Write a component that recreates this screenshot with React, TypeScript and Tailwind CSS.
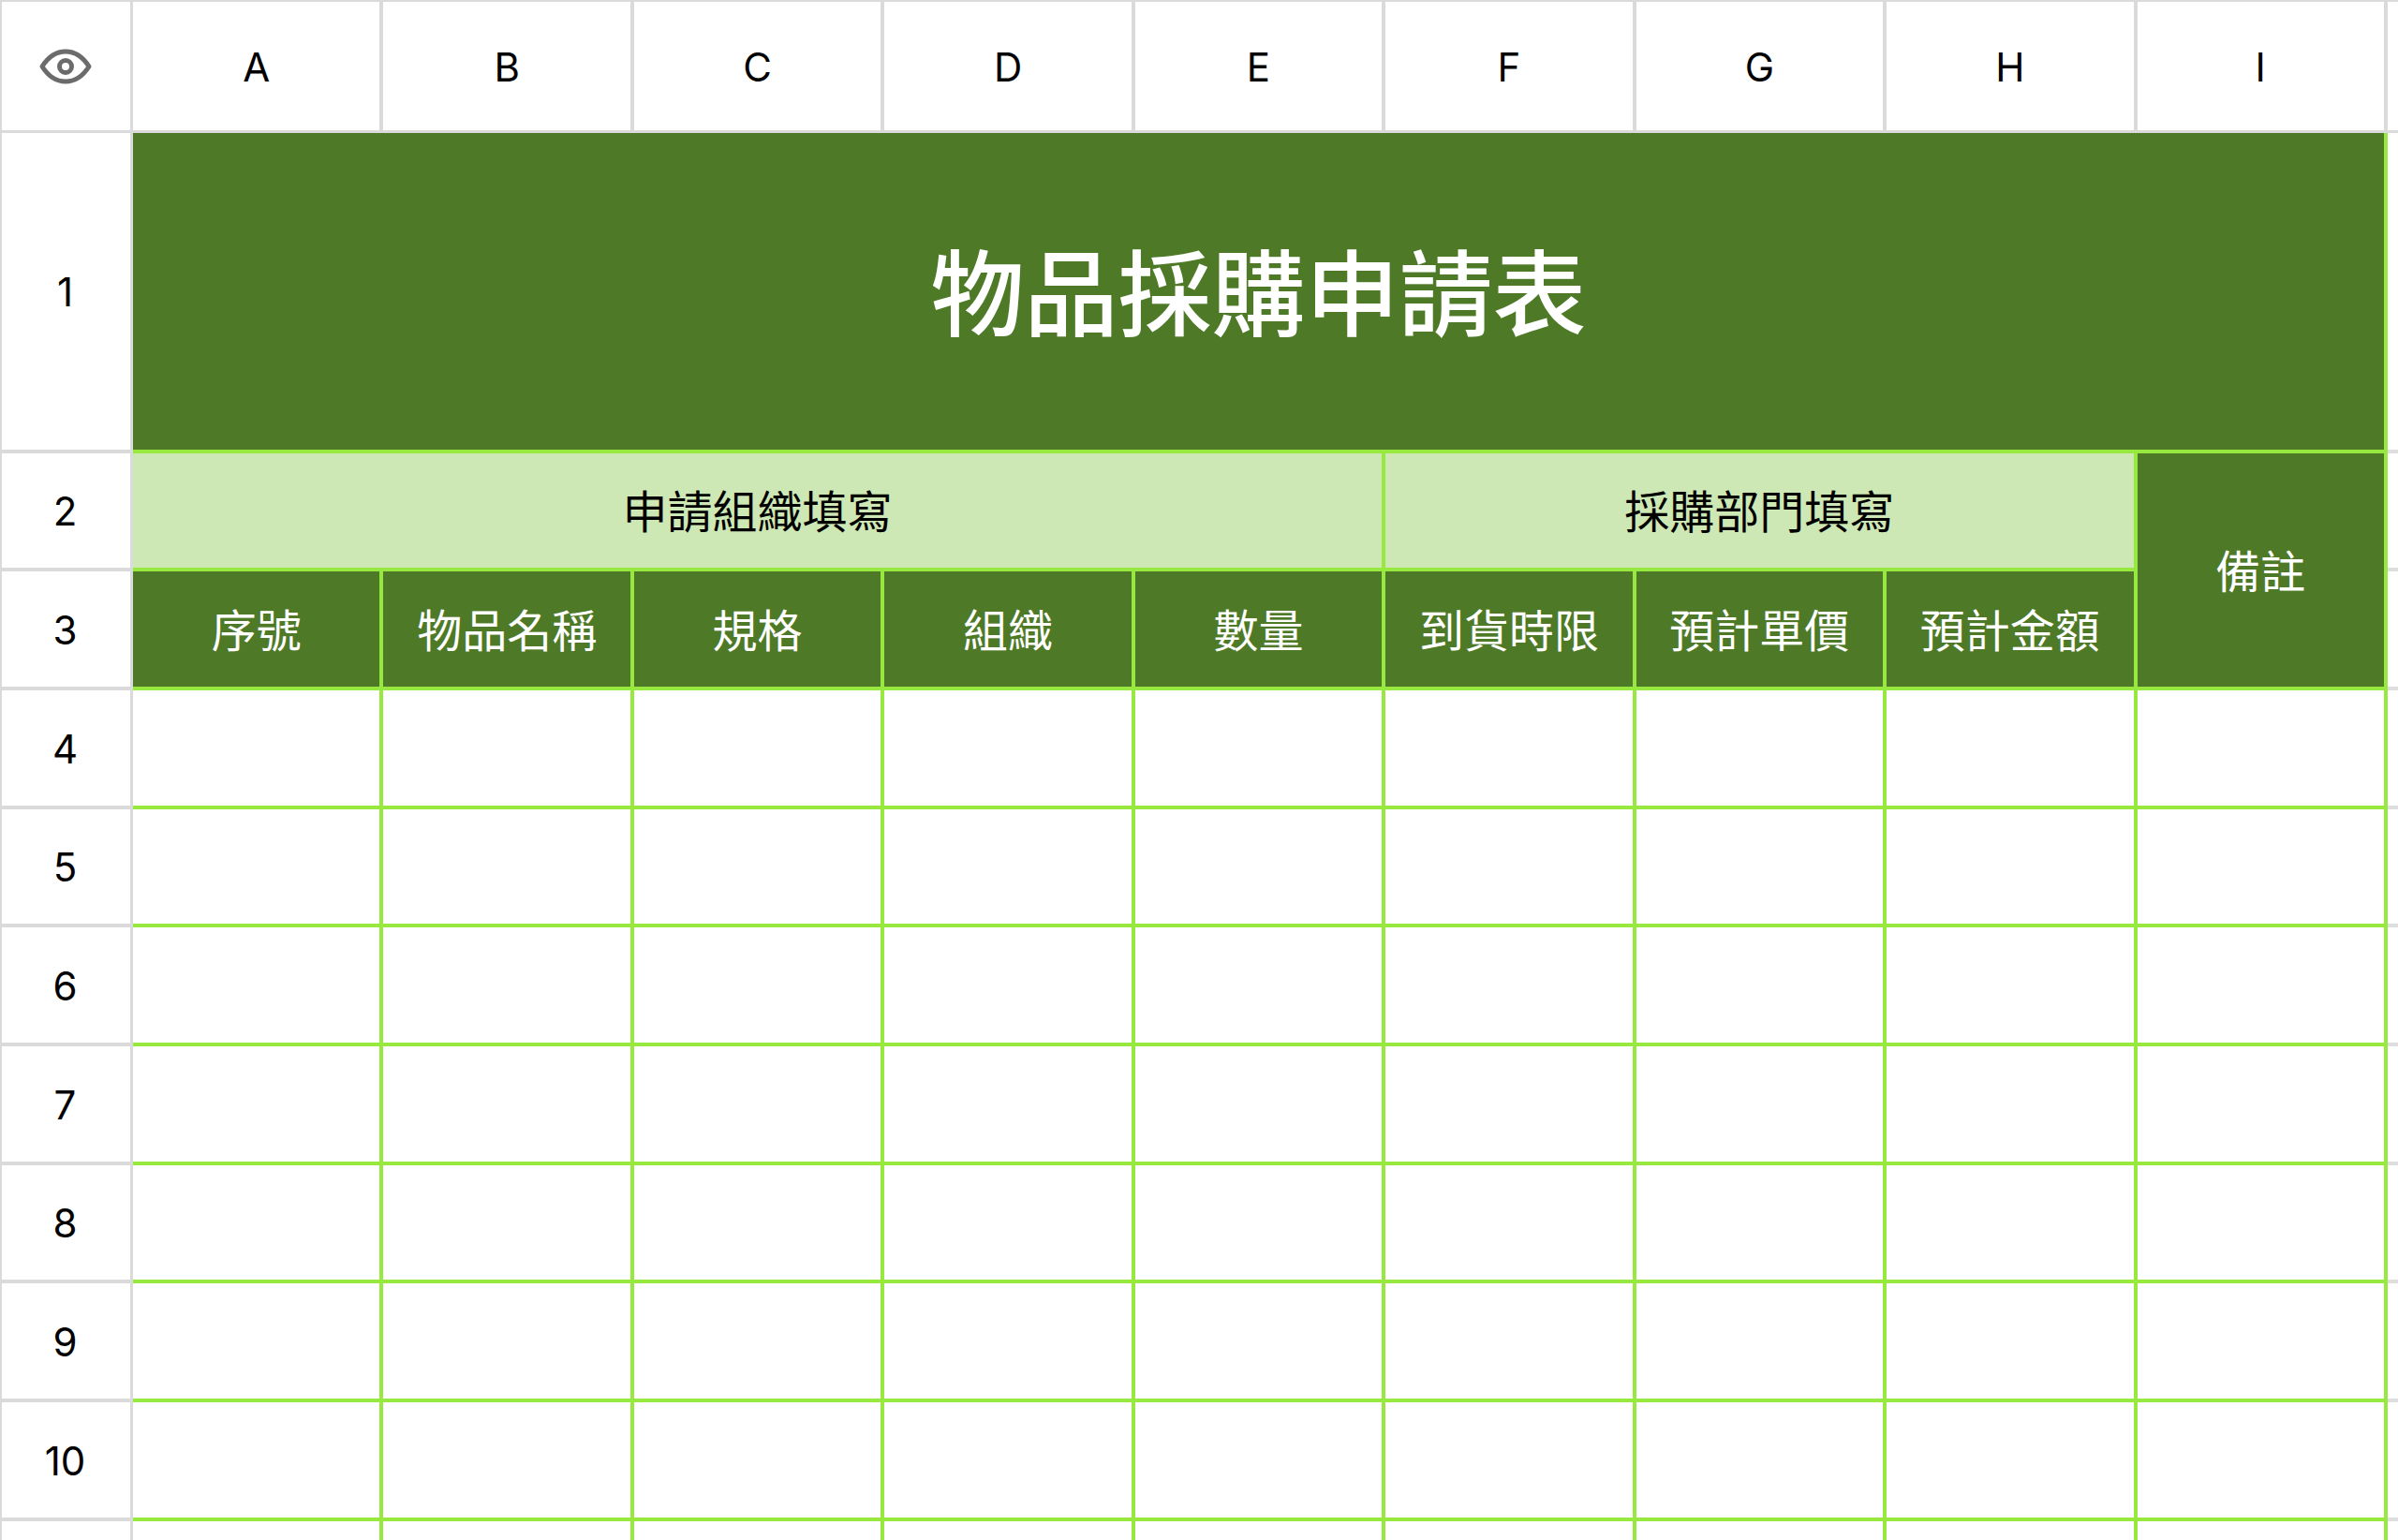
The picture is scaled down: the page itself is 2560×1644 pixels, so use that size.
import React from 'react';
import clsx from 'clsx';

const COLUMNS = ['A', 'B', 'C', 'D', 'E', 'F', 'G', 'H', 'I'];
const FIELDS = ['序號', '物品名稱', '規格', '組織', '數量', '到貨時限', '預計單價', '預計金額'];
const EMPTY_ROWS = [4, 5, 6, 7, 8, 9, 10];

const GRID = 'border-r-4 border-b-4 border-[#97e83f] px-0 pb-0';
const DARK = 'bg-[#4e7a27] text-white';
const LIGHT = 'bg-[#cde8b4] text-black';
const LABEL = 'pt-1 text-[48px] leading-[56px] font-normal text-center align-middle';

function EyeIcon() {
  return (
    <svg viewBox="0 0 56 38" className="w-14 h-[38px]" fill="none" stroke="#6b6b6b" strokeWidth="5" strokeLinejoin="round">
      <path d="M3 19C10 8 19 3 28 3S46 8 53 19C46 30 37 35 28 35S10 30 3 19Z" />
      <circle cx="28" cy="19" r="6.5" />
    </svg>
  );
}

function RowNumber({ n }: { n?: number }) {
  return (
    <th scope="row" className="border-l-2 border-r-3 border-b-4 border-[#dadada] pl-0 pr-0.5 pt-0.5 pb-0 text-[42px] leading-[48px] font-normal text-center align-middle">
      {n}
    </th>
  );
}

// Sliver of the next column, past the edge of the form
function NextColumn() {
  return <td className="border-b-4 border-[#dedede] p-0" />;
}

export default function App() {
  return (
    <div className="h-screen overflow-hidden bg-white text-black font-['Inter','Noto_Sans_CJK_TC',sans-serif]">
      <table lang="zh-Hant" className="w-full table-fixed border-separate border-spacing-0">
        <colgroup>
          <col className="w-[142px]" />
          {COLUMNS.map(c => <col key={c} />)}
          <col className="w-[11px]" />
        </colgroup>
        <thead>
          <tr className="h-[142px]">
            <th className="border-t-2 border-l-2 border-r-3 border-b-3 border-[#dadada] pl-0 pr-0.5 py-0">
              <button type="button" aria-label="顯示" className="flex w-full items-center justify-center">
                <EyeIcon />
              </button>
            </th>
            {COLUMNS.map(c => (
              <th key={c} scope="col" className="border-t-2 border-r-4 border-b-3 border-[#dadada] px-0 pt-0.5 pb-0 text-[42px] leading-[48px] font-normal text-center">
                {c}
              </th>
            ))}
            <td className="border-t-2 border-b-3 border-[#dadada] p-0" />
          </tr>
        </thead>
        <tbody>
          <tr className="h-[342px]">
            <RowNumber n={1} />
            <th colSpan={9} className={clsx(GRID, DARK, 'pt-2 text-[100px] leading-[120px] font-medium text-center align-middle')}>
              物品採購申請表
            </th>
            <NextColumn />
          </tr>
          <tr className="h-[126px]">
            <RowNumber n={2} />
            <th colSpan={5} className={clsx(GRID, LIGHT, LABEL)}>申請組織填寫</th>
            <th colSpan={3} className={clsx(GRID, LIGHT, LABEL)}>採購部門填寫</th>
            <th rowSpan={2} className={clsx(GRID, DARK, LABEL)}>備註</th>
            <NextColumn />
          </tr>
          <tr className="h-[127px]">
            <RowNumber n={3} />
            {FIELDS.map(f => <th key={f} scope="col" className={clsx(GRID, DARK, LABEL)}>{f}</th>)}
            <NextColumn />
          </tr>
          {EMPTY_ROWS.map(n => (
            <tr key={n} className={n % 3 === 2 ? 'h-[126px]' : 'h-[127px]'}>
              <RowNumber n={n} />
              {COLUMNS.map(c => <td key={c} className={GRID} />)}
              <NextColumn />
            </tr>
          ))}
          <tr className="h-[126px]">
            <RowNumber />
            {COLUMNS.map(c => <td key={c} className={GRID} />)}
            <NextColumn />
          </tr>
        </tbody>
      </table>
    </div>
  );
}
